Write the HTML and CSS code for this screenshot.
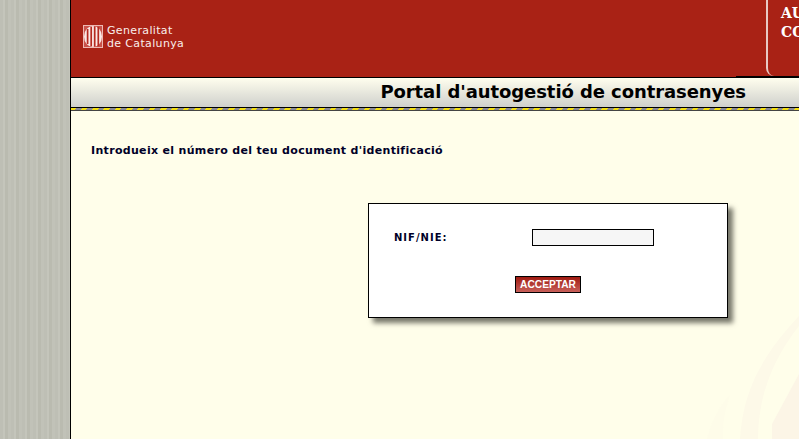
FILE: index.html
```html
<!DOCTYPE html>
<html lang="ca">
<head>
<meta charset="utf-8">
<title>Portal d'autogestió de contrasenyes</title>
<link rel="stylesheet" href="styles.css">
</head>
<body>
<div class="page">
  <aside class="side"></aside>
  <main class="main">
    <header class="head">
      <div class="brand">
        <svg class="logo" width="20" height="23" viewBox="0 0 20 23">
          <rect x=".5" y=".5" width="19" height="22" fill="#c9524a" stroke="#eeb9b3"/>
          <ellipse cx="10" cy="11.5" rx="9" ry="10.5" fill="#fbe9e6"/>
          <path d="M3.8 4v15M7.4 1.8v19.4M10.9 1.2v20.6M14.5 1.8v19.4" stroke="#b52a20" stroke-width="1.7" transform="translate(.8 0)"/>
        </svg>
        <div class="brand-text">Generalitat<br>de Catalunya</div>
      </div>
      <div class="app-box">AU<br>CO</div>
    </header>
    <div class="title-bar"><h1 class="title">Portal d'autogestió de contrasenyes</h1></div>
    <div class="stripe"></div>
    <section class="content">
      <svg class="watermark" width="100" height="139" viewBox="699 300 100 139">
        <path d="M740 439C743 392 760 358 799 316V326C776 355 758 392 758 439Z" fill="#fdf9e8"/>
        <path d="M772 424L799 374V439H772Z" fill="#fcf5e6"/>
        <path d="M707 439C712 420 720 405 730 395C725 410 722 425 723 439Z" fill="#fefce9"/>
      </svg>
      <p class="intro">Introdueix el número del teu document d'identificació</p>
      <form class="panel">
        <div class="row">
          <label class="label" for="nif">NIF/NIE:</label>
          <input class="field" id="nif" type="text">
        </div>
        <div class="actions"><button class="btn" type="button">ACCEPTAR</button></div>
      </form>
    </section>
  </main>
</div>
</body>
</html>
```
FILE: styles.css
```css
* { box-sizing: border-box; }
html, body { margin: 0; height: 100%; overflow: hidden; }
body { font-family: "DejaVu Sans", Verdana, sans-serif; background: #fffeea; }
.page { display: flex; height: 439px; width: 799px; }
.side {
  flex: 0 0 70px;
  background: repeating-linear-gradient(90deg, #bebfb5 0 3px, #c4c5bb 3px 5px, #babbb0 5px 8px, #c1c2b8 8px 11px);
}
.main { flex: 1; min-width: 0; border-left: 1px solid #000; display: flex; flex-direction: column; overflow: hidden; }
.head {
  position: relative;
  height: 77px;
  background: #a92215;
  display: flex;
  justify-content: space-between;
  align-items: flex-start;
  flex: none;
}
.head::after {
  content: "";
  position: absolute;
  right: 0;
  bottom: 0;
  width: 63px;
  height: 1px;
  background: #000;
}
.brand { display: flex; align-items: flex-start; gap: 4px; margin: 25px 0 0 12px; }
.logo { flex: none; }
.brand-text { color: #f9eeeb; font-size: 11px; line-height: 13px; letter-spacing: .35px; margin-top: -1px; }
.app-box {
  width: 33px;
  height: 76px;
  border-left: 2px solid #e8c9c4;
  border-bottom-left-radius: 8px;
  padding: 4px 0 0 13px;
  color: #fff;
  font: bold 14px/19px "DejaVu Serif", serif;
  white-space: nowrap;
  overflow: hidden;
}
.title-bar {
  height: 31px;
  flex: none;
  border-top: 1px solid #000;
  border-bottom: 1px solid #000;
  background: linear-gradient(#fffeee, #cfd0cc);
  text-align: right;
  padding-right: 53px;
}
.title { margin: 0; font-size: 18px; line-height: 28px; font-weight: bold; color: #000; letter-spacing: -.08px; }
.stripe {
  height: 3px;
  flex: none;
  background: repeating-linear-gradient(135deg, #f5e010 0 4px, #8a8a98 4px 8px);
  border-bottom: 1px solid #444;
}
.content { position: relative; flex: 1; padding: 33px 0 0 20px; background: #fffeea; }
.watermark { position: absolute; right: 0; bottom: 0; }
.intro { position: relative; margin: 0; font-size: 11px; line-height: 14px; font-weight: bold; color: #000028; letter-spacing: .32px; }
.panel {
  position: relative;
  width: 360px;
  height: 115px;
  margin: 45px 0 0 277px;
  background: #fff;
  border: 1px solid #000;
  box-shadow: 5px 5px 5px #77776a;
  padding: 25px 0 0 25px;
}
.row { display: flex; align-items: center; }
.label { width: 138px; font-size: 10px; font-weight: bold; color: #000028; letter-spacing: 1px; }
.field { width: 122px; height: 17px; border: 1px solid #000; background: #f6f6f6; padding: 0; }
.actions { margin-top: 30px; padding-left: 121px; }
.btn {
  display: block;
  width: 66px;
  height: 17px;
  padding: 0;
  border: 1px solid #000;
  background: linear-gradient(#a01a10, #c8605a);
  color: #fff;
  font: bold 10.2px/15px "Liberation Sans", Arial, sans-serif;
}
```
